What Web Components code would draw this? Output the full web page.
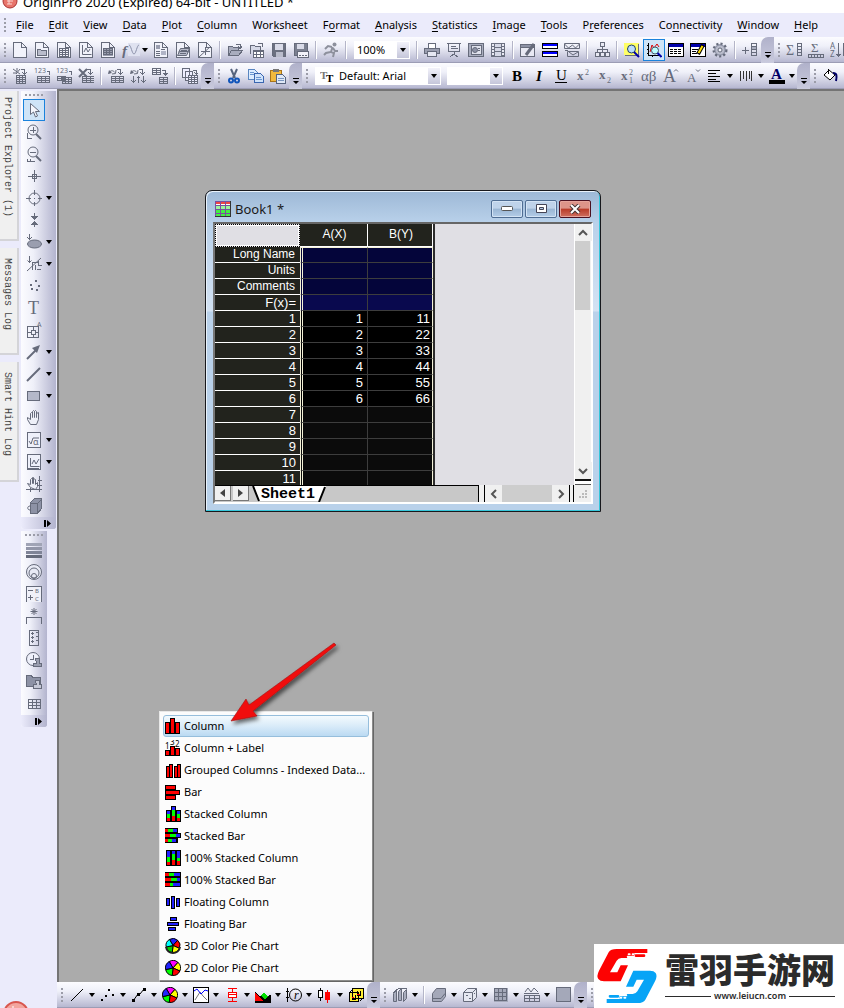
<!DOCTYPE html>
<html lang="en">
<head>
<meta charset="utf-8">
<title>OriginPro 2020 (Expired) 64-bit - UNTITLED *</title>
<style>
  body { margin: 0; font-family: "Noto Sans", "Open Sans", sans-serif; font-size: 11px; color: #000; background: #ebebfb; }
</style>
</head>
<body>
<origin-app></origin-app>
<script>
const G = '#666b7b';

/* ---------- drawing helpers for the icon set ---------- */
const p = (d, a = '') => `<path d="${d}" ${a}/>`;
const box = (x, y, w, h, fill, a = 'stroke="none"') => `<rect x="${x}" y="${y}" width="${w}" height="${h}" fill="${fill}" ${a}/>`;
const grid = (x, y, cols, rows, cw, ch, a = '') => {
  let d = '';
  for (let i = 0; i <= cols; i++) d += `M${x + i * cw + .5} ${y}v${rows * ch + 1}`;
  for (let j = 0; j <= rows; j++) d += `M${x} ${y + j * ch + .5}h${cols * cw + 1}`;
  return p(d, a);
};
const txt = (s, x, y, size, a = '') => `<text x="${x}" y="${y}" font-size="${size}" stroke="none" fill="${G}" ${a}>${s}</text>`;
const page = p('M1.5.5h8l5 5v10h-13zM9.5.5v5h5', 'fill="#f1f2fa"');
const pie = (cx, cy, r, colors) => {
  const n = colors.length;
  const pt = i => { const t = (i / n) * 2 * Math.PI - 2.1; return `${(cx + r * Math.cos(t)).toFixed(2)} ${(cy + r * Math.sin(t)).toFixed(2)}`; };
  return colors.map((c, i) => p(`M${cx} ${cy}L${pt(i)}A${r} ${r} 0 0 1 ${pt(i + 1)}z`, `fill="${c}" stroke="#000" shape-rendering="auto"`)).join('');
};
const smooth = 'shape-rendering="auto"';
const serif = 'font-family="Liberation Serif, serif"';
const red = 'fill="#f00" stroke="#000"', blue = 'fill="#22f" stroke="#000"';
const segs = list => list.map(([x, y, w, h, c]) => box(x, y, w, h, c)).join('');
const cyc = p('M1 5.500C2 2 5 2 7 4.500M4 6l3.500-.5L8 2', smooth) + p('M1 2l3 3-4 1z', `fill="${G}" stroke="none" ${smooth}`);
const down = p('M12.500 1v5M10.500 4.500l2 2 2-2M9 1.500h3');

const ICONS = {
  new: page,
  folderpage: page + p('M3.500 7.500h3l1 1h5v5h-9z', 'fill="#b9bccb"'),
  sheetpage: page + grid(3, 6, 3, 4, 3, 2),
  graphpage: page + p('M4.500 3v9.500h9M6 10l2-4 2 4 2-3', smooth),
  matrixpage: page + box(3, 6, 10, 8, '#9a9eaf') + grid(3, 6, 3, 3, 3, 2),
  fx: box(6, 1, 12, 13, '#dfe2f0') + p('M7 3c2 0 3 9 5 9s3-9 5-9', 'stroke="#8a90a8" ' + smooth) + txt('f', 0, 14, 15, serif + ' font-style="italic" font-weight="bold"'),
  layoutpage: page + box(3, 3, 4, 4, '#9a9eaf') + p('M3 9.500h4M3 11.500h4M3 13.500h4M8 7.500h4') + box(8, 9, 5, 4, '#b0b4c6'),
  stackpage: page + p('M2.500 13.500l2-4h9l-2 4zM3.500 10.500l2-4h9l-2 4', 'fill="#b9bccb" ' + smooth) + p('M6 8.500h6M5 11.500h6'),
  starpage: page + p('M8.500 5v8M4 9.500h9M2 15L14 4', smooth),
  open: p('M1.500 13.500v-9h4l1 1h5v3M1.500 13.500l3-5h11l-4 5z', 'fill="#a9adbe"') + p('M9 2.500h4v3M11 4.500l2 2 2-2'),
  opensheet: p('M1.500 11.500v-8h4l1 1h5v3', 'fill="#d5d8e6"') + p('M9 1.500h4v3') + box(4.5, 8.5, 10, 7, '#fff', '') + p('M4 9.500h11M7.500 10v5M11.500 10v5M5 12.500h9'),
  save: p('M1.500 1.500h13v13h-12l-1-1z', 'fill="#6b7080"') + box(4, 2, 8, 6, '#d9dbe8') + box(5, 10, 7, 5, '#b9bccb'),
  savetpl: p('M1.500 1.500h13v12h-13z', 'fill="#7b8090"') + box(4, 2, 7, 5, '#d9dbe8') + box(4.5, 9.5, 11, 6, '#f3f3fa', '') + p('M6 13.500h2M9 13.500h2M12 13.500h2'),
  run: `<circle cx="11.500" cy="2.500" r="2" fill="#8d909c" stroke="none" ${smooth}/>` + p('M9 5L5 4 2 7M9.500 5L8 10l-5 1-2 2M8 10l3 1-1 4M10 6l2 3h3', `stroke="#8d909c" stroke-width="2" ${smooth}`),
  print: p('M4.500 6V1.500h7V6', 'fill="#fff"') + p('M.5 6.500h15v5h-15z', 'fill="#9a9eaf"') + p('M3.500 9.500h9v5h-9z', 'fill="#e6e8f2"'),
  slide: p('M1 1.500h14M2.500 2v7h11V2M8 9v3M4 15l4-3 4 3') + p('M5 4.500h5M5 6.500h7'),
  view: p('M.5 1.500h15v13H.5z', 'fill="#a9adbe"') + p('M3 3.500h10v9H3z', 'fill="#dfe1ec"') + `<circle cx="7" cy="8" r="2.500" fill="#8d92a5" ${smooth}/>` + p('M10 6.500h2M10 8.500h2'),
  film: box(1, 1, 14, 14, '#6b7080') + [2, 5, 8, 11].map(y => box(2, y, 2, 2, '#e8e9f3') + box(12, y, 2, 2, '#e8e9f3')).join('') + box(5, 2, 6, 3, '#d5d8e6') + box(5, 6, 6, 3, '#d5d8e6') + box(5, 10, 6, 4, '#d5d8e6'),
  editpen: p('M.5 2.500h14v12H.5zM.5 5.500h14', 'fill="#e8e9f3"') + box(1, 3, 13, 2, '#8d92a5') + p('M6 13L14 2', `stroke-width="3" ${smooth}`) + p('M3 14h4'),
  panes: p('M.5 1.500h15v5H.5zM.5 9.500h15v5H.5z', 'fill="#fff" stroke="#000"') + box(1, 2, 14, 2, '#00f') + box(1, 10, 14, 2, '#00f'),
  envelopes: p('M.5 1.500h15v5H.5zM.5 2l4 4 4-3 3 3 4-4M3.500 9.500h11v5h-11zM1 8.500h3M5 10l4 3 5-3', smooth),
  tree: p('M6.500.5h4v4h-4zM1.500 10.500h4v4h-4zM6.500 10.500h4v4h-4zM11.500 10.500h4v4h-4zM8.500 5v5M3.500 10V7.500h10V10', 'fill="#e8e9f3"'),
  findyellow: box(0, 1, 15, 12, '#ff6') + p('M.5 13.500h14v-12') + `<circle cx="7.500" cy="7" r="4" fill="#bdf" stroke="#246" ${smooth}/>` + p('M10 10l5 5', `stroke="#00a" stroke-width="2" ${smooth}`),
  findgraph: p('M2.500 1v12.500H14', 'stroke="#000"') + p('M1 3.500h2M1 7.500h2M1 11.500h2M6.500 13v2', 'stroke="#000"') + p('M4 10l2-7 2 3 3-4 2 3', `stroke="#d00" ${smooth}`) + `<circle cx="9" cy="8.500" r="3.500" fill="#bff" stroke="#456" ${smooth}/>` + p('M11.500 11l4 4', `stroke="#00a" stroke-width="2" ${smooth}`),
  table: box(.5, 1.5, 15, 13, '#fff', 'stroke="#000"') + box(1, 2, 14, 3, '#00a') + p('M2 7.500h12M2 9.500h12M2 11.500h12', 'stroke="#000" stroke-dasharray="3 1"'),
  tableedit: box(.5, 1.5, 15, 13, '#fff', 'stroke="#000"') + box(1, 2, 14, 3, '#00a') + p('M2 7.500h6M2 9.500h4M2 11.500h5', 'stroke="#000"') + p('M8 12l5-9', `stroke="#000" stroke-width="4" ${smooth}`) + p('M8.500 11l4-7', `stroke="#fd0" stroke-width="2" ${smooth}`),
  gear: `<circle cx="8" cy="8" r="6" fill="#a9adbe" stroke-width="3" stroke-dasharray="2 2" ${smooth}/><circle cx="8" cy="8" r="5" fill="#b9bccb" stroke="#8d92a5" ${smooth}/><circle cx="8" cy="8" r="2" fill="#f1f2fa" ${smooth}/>`,
  addcol: p('M0 8.500h7M3.500 5v7') + grid(9, 1, 1, 4, 5, 3) + box(10, 5, 4, 2, '#a9adbe'),
  sigmacol: txt('Σ', 0, 13, 14, serif) + grid(11, 1, 1, 4, 4, 3),
  sigmarow: txt('Σ', 3, 10, 13, serif) + grid(0, 12, 5, 1, 3, 3),
  sort: txt('A', 0, 7, 8) + txt('Z', 0, 15, 8) + p('M8.500 1v13M6.500 12l2 2 2-2M13.500 1v13'),

  wand: p('M1 1l7 5M5 0v3M1 5h4M8 1L4 6', smooth) + down + grid(4, 7, 3, 4, 3, 2),
  num1: txt('123', 0, 5, 7) + p('M13 3.500h2v3') + grid(3, 8, 3, 3, 4, 2),
  num2: txt('123', 0, 5, 7) + p('M13 3.500h2v3') + grid(1, 8, 2, 2, 4, 2) + grid(6, 9, 3, 3, 3, 2),
  excel: p('M1 1l8 8M9 1l-8 8', `stroke-width="2" ${smooth}`) + down + grid(4, 8, 3, 3, 4, 2),
  recalc: cyc + down + grid(3, 8, 3, 3, 4, 2),
  recalcall: cyc + down + p('M3.500 8v6M1.500 12.500l2 2 2-2M8.500 8v7M6.500 10.500l2-2 2 2M13.500 8v6M11.500 12.500l2 2 2-2'),
  transpose: grid(0, 0, 2, 3, 4, 2) + p('M10 2.500h3v4M11.500 5l2 2 2-2') + grid(7, 9, 2, 3, 4, 2),
  stack: p('M.5.500h7v9h-7zM3.500 3.500h7v9h-7z', 'fill="#eef"') + p('M11 2.500h3v3M12.500 4.500l2 2 2-2') + box(6, 7, 10, 9, '#eef') + grid(6, 7, 3, 4, 3, 2),
  cut: p('M5 1l4 9M11 1L7 10', `stroke="#56647e" stroke-width="2" ${smooth}`) + `<circle cx="5" cy="12.500" r="2" stroke="#15b" stroke-width="2" ${smooth}/><circle cx="11" cy="12.500" r="2" stroke="#15b" stroke-width="2" ${smooth}/>`,
  copy: p('M.5 1.500h6l3 3v7h-9z', 'fill="#dcecff" stroke="#5a86c0"') + p('M6.500 5.500h6l3 3v6h-9z', 'fill="#cfe2fa" stroke="#3a66b0"') + p('M8 9.500h5M8 11.500h6M2 4.500h4M2 6.500h4', 'stroke="#6a96d0"'),
  paste: p('M.5 2.500h11v11h-11z', 'fill="#f2b93c" stroke="#a8741a"') + box(3, 1, 6, 3, '#777') + p('M6.500 6.500h6l3 3v6h-9z', 'fill="#dfe8f6" stroke="#56647e"') + p('M8 10.500h6M8 12.500h6', 'stroke="#7a96c0"'),
  bold: txt('B', 3, 13, 15, serif + ' font-weight="bold" style="fill:#000"'),
  italic: txt('I', 5, 13, 15, serif + ' font-weight="bold" font-style="italic" style="fill:#000"'),
  underline: txt('U', 3, 12, 15, serif + ' style="fill:#000"') + p('M2 14.500h12', 'stroke="#000"'),
  sup: txt('x', 2, 12, 13, serif + ' font-weight="bold"') + txt('2', 10, 7, 8, serif),
  sub: txt('x', 2, 11, 13, serif + ' font-weight="bold"') + txt('2', 10, 15, 8, serif),
  supsub: txt('x', 2, 12, 13, serif + ' font-weight="bold"') + txt('2', 10, 7, 8, serif) + txt('1', 10, 15, 8, serif),
  greek: txt('αβ', 0, 13, 15, serif),
  grow: txt('A', 0, 14, 18, serif) + p('M11 3.500l2-2 2 2', smooth),
  shrink: txt('A', 2, 14, 13, serif) + p('M11 1.500l2 2 2-2', smooth),
  align: p('M1 2.500h12M1 5.500h8M1 8.500h12M1 11.500h8M1 13.500h12', 'stroke="#000"'),
  vlines: p('M2.500 3v10M5.500 3v8M8.500 3v10M11.500 3v8M13.500 3v10', 'stroke="#333"'),
  fontcolor: txt('A', 2, 11, 15, serif + ' font-weight="bold" style="fill:#006"') + box(0, 12, 16, 4, '#000'),
  fill: p('M2 7l5-5 6 5-5 5z', `fill="#fff" stroke="#000" ${smooth}`) + p('M6 6V1', 'stroke="#000"') + p('M11 5c4 0 4 3 3 8', `stroke="#006" stroke-width="2" ${smooth}`),

  pointer: p('M4.500 1.500v11l3-2.500 2 5 2-1-2-4.500h4z', `fill="#f5f6fc" ${smooth}`),
  zoomin: `<circle cx="7" cy="6" r="5" ${smooth}/>` + p('M4 6.500h6M7.500 3v6M1.500 9v5.500H6') + p('M10 10l5 5', `stroke-width="2" ${smooth}`),
  zoomout: `<circle cx="7" cy="6" r="5" ${smooth}/>` + p('M4 6.500h6M1 12.500v3h8M4.500 13v2') + p('M10 10l5 5', `stroke-width="2" ${smooth}`),
  cross: p('M8.500 2v12M2 8.500h13M6.500 6.500h4v4h-4z'),
  target: `<circle cx="8.500" cy="8.500" r="5.500" ${smooth}/>` + p('M8.500 0v5M8.500 12v4M0 8.500h5M12 8.500h4M8 8.500h1'),
  arrows: p('M8.500 1v6M5.500 4.500l3 3 3-3zM8.500 15v-5M5.500 12.500l3-3 3 3z', `fill="${G}"`),
  ellipse: `<ellipse cx="8.500" cy="10" rx="7" ry="4" fill="#9a9eaf" ${smooth}/>` + p('M3.500 0v6M1.500 3.500l2 2 2-2'),
  picker: p('M3.500 0v7M1.500 4.500l2 2 2-2M15 2L1 15', smooth) + p('M6.500 14v-8h5M9.500 9v5M12.500 5v4h3M11 13.500h4'),
  dots: p('M4 7h2M9 3h2M12 8h2M5 11h2M10 12h2', 'stroke-width="2"'),
  text: txt('T', 2, 14, 18, serif),
  region: p('M1.500 4.500h11v11h-11zM7 5v3M7 12v3M2 10h3M9 10h3') + p('M5 8h4v4H5z') + txt('A', 11, 5, 7),
  arrow: p('M1 15L11 5', `stroke-width="2" ${smooth}`) + p('M6 4l8-3-3 8z', `fill="${G}" stroke="none" ${smooth}`),
  line: p('M1 15L14 2', `stroke-width="2" ${smooth}`),
  rect: p('M1.500 3.500h12v9h-12z', 'fill="#b4b8c9"'),
  hand: p('M4.500 14.500L1.500 9.500v-2l3 2v-6l1-1 1 1v4-6l1-1 1 1v6-6l1-1 1 1v6-4l2-1v7l-2 5z', `fill="#eef0f8" ${smooth}`),
  sqrt: box(1.5, .5, 13, 15, '#eef0fa', '') + p('M3 9l2 3 2-6h6', smooth) + txt('α', 7, 13, 9),
  graphobj: box(1.5, .5, 13, 15, '#eef0fa', '') + p('M4.500 4v8.500h9M2 14.500h11M6 10l2-4 2 4 3-5', smooth),
  handaxes: p('M4.500 11.500L1.500 7.500l3 1v-5l1-1 1 1v4-6h1v6-5l2 1v5l2-2v4l-2 3z', `fill="#eef0f8" ${smooth}`) + p('M0 13.500h16M4.500 12v4M13.500 0v16M12 4.500h4M12 9.500h4'),
  cube: p('M4.500 4.500l4-4h7v10l-4 5h-7z', 'fill="#8d92a5"') + p('M4.500 5.500h7l4-4M11.500 5v10') + p('M4 8c-3 0-3 4 0 4', smooth),
  layers: box(0, 1, 16, 3, '#a0a4b5') + box(0, 5, 16, 3, '#9296a8') + box(0, 9, 16, 3, '#7f8497') + box(0, 13, 16, 3, G),
  rings: `<circle cx="8" cy="8" r="7.500" fill="#e8eaf5" ${smooth}/><circle cx="8" cy="9" r="5" ${smooth}/><circle cx="8" cy="12" r="2.500" ${smooth}/>`,
  legend: p('M.5 15.500V.5h15v15', 'fill="#f0f1f9"') + p('M2 4.500h5M2 11.500h5M4.500 9v5') + txt('B', 9, 7, 6) + txt('C', 9, 15, 6),
  bracket: p('M.5 15.500v-6h15v6') + p('M8 0v7M4.500 3.500h7M5.500 1l5 5M10.500 1l-5 5', smooth),
  scale: p('M3.500.5h9v15h-9zM5 3.500h3M5 7.500h3M5 11.500h3M10 2.500h2M10 6.500h2M10 10.500h2M6.500 2v3M6.500 6v3M6.500 10v3'),
  clock: `<circle cx="7" cy="7" r="6.500" fill="#eef0fa" ${smooth}/>` + p('M7 3v4H4') + p('M9.500 6.500h4v5h2v3h-8v-3h3z', 'fill="#9a9eaf"'),
  folder: p('M.5 12.500v-11h5l1 2h8v9z', 'fill="#8d92a5"') + p('M9.500 6.500h4v4h2v4h-8v-4h3z', 'fill="#c5c8d6"'),
  gridt: grid(2, 3, 3, 3, 4, 3),

  pline: p('M2 14L14 2', `stroke="#000" ${smooth}`),
  pscatter: segs([[1, 12, 2, 2, '#000'], [5, 8, 2, 2, '#000'], [8, 2, 2, 2, '#000'], [12, 7, 2, 2, '#000']]),
  plinesym: p('M2 14L7 7h2l4-5', `stroke="#000" ${smooth}`) + segs([[1, 12, 3, 3, '#000'], [6, 6, 3, 3, '#000'], [12, 1, 3, 3, '#000']]),
  pie2: pie(8, 8, 7.5, ['#f0f', '#ff0', '#f00', '#0f0', '#22f']),
  pie3: pie(8, 7.5, 7, ['#22f', '#f00', '#ff0', '#0c0', '#0ff']) + p('M1 9c1 8 13 8 14 0', `stroke="#222" stroke-width="2" ${smooth}`),
  pgraph: box(.5, .5, 15, 15, '#fff', 'stroke="#000"') + p('M2 13l5-8 3 4 4 4', `stroke="#777" ${smooth}`) + p('M1 4l3-2 4 5 4-4 3 1', `stroke="#00f" ${smooth}`),
  pbox: p('M8.500 1v14M4 1.500h9M4 14.500h9', 'stroke="#f00"') + p('M4.500 5.500h8v5h-8zM4 7.500h9', 'stroke="#f00" fill="#fff"'),
  parea: p('M0 16V5l5 5 4-5 2 4 5-1v8z', 'fill="#000" stroke="none"') + p('M0 14V5l8 9z', 'fill="#f00" stroke="none"') + p('M6 9l3-4 4 5-3 2z', 'fill="#0d0" stroke="none"'),
  polar: p('M1.500 1v14M0 4.500h3M0 10.500h3', 'stroke="#000"') + `<circle cx="9.500" cy="8" r="6" stroke="#000" ${smooth}/>` + txt('r', 8, 12, 12, serif + ' font-style="italic" style="fill:#000"'),
  candle: p('M3.500 1v13', 'stroke="#000"') + box(1.5, 3.5, 4, 7, '#fff', 'stroke="#000"') + p('M10.500 3v13', 'stroke="#f00"') + box(8, 5, 5, 8, '#f00'),
  pyellow: p('M1.500 5.500h9v9h-9zM4.500 1.500h11v10h-11z', 'fill="#fe3" stroke="#000"') + p('M4.500 8v4.500h3V8M9.500 4v4h3V4', 'stroke="#000"') + p('M2 5l3-3M12 14l3-3', 'stroke="#000"') + p('M4 10h2M9 7h3', 'stroke="#f00"'),
  g3bars: p('M1.500 6.500l3-3v11h-3zM6.500 4.500l3-3v12h-3zM11.500 5.500l3-3v9l-3 3z', `fill="#a9adbe" ${smooth}`) + p('M1 6l6-5h8'),
  slab: p('M1.500 6.500l4-5h9v8l-4 5h-9z', `fill="#a4a8b9" ${smooth}`) + p('M1 11.500h9l4-5', smooth),
  cubedots: p('M1.500 5.500l4-4h9v9l-4 4h-9zM1.500 5.500h9v9M10.500 5.500l4-4', `fill="#e6e8f2" ${smooth}`) + p('M4 8h2M7 11h2M12 6h1'),
  contourgrid: box(1, 1, 14, 14, '#a4a8b9') + grid(1, 1, 3, 3, 4, 4),
  waves: p('M0 6.500h15M1 5l3-4 3 4 3-4 4 4', smooth) + grid(0, 8, 3, 2, 5, 3),
  plate: box(1.5, .5, 14, 14, '#a4a8b9', ''),

  column: p('M.5 4.500h4v11h-4zM5.500.5h4v15h-4zM10.500 4.500h4v11h-4z', red),
  columnlabel: p('M.5 10.500h4v5h-4zM5.500 6.500h4v9h-4zM10.500 8.500h4v7h-4z', red) + txt('1', 0, 9, 8, 'style="fill:#000"') + txt('3', 5, 5, 8, 'style="fill:#000"') + txt('2', 10, 7, 8, 'style="fill:#000"'),
  grouped: p('M1.500 4.500h3v11h-3zM4.500 2.500h3v13h-3zM9.500 4.500h3v11h-3zM12.500 2.500h3v13h-3z', red),
  bar: p('M.5 1.500h10v4H.5zM.5 6.500h14v4H.5zM.5 11.500h10v4H.5z', red),
  stackcol: box(1, 4, 15, 12, '#000') + box(6, 0, 5, 5, '#000') + segs([[2, 5, 3, 3, '#22f'], [2, 8, 3, 4, '#0f0'], [2, 12, 3, 3, '#f00'], [7, 1, 3, 3, '#22f'], [7, 4, 3, 6, '#0f0'], [7, 10, 3, 5, '#f00'], [12, 5, 3, 3, '#22f'], [12, 8, 3, 4, '#0f0'], [12, 12, 3, 3, '#f00'], [5, 0, 1, 3, '#fff']]),
  stackbar: box(0, 0, 13, 15, '#000') + box(11, 5, 5, 5, '#000') + segs([[0, 1, 3, 3, '#f00'], [3, 1, 5, 3, '#0f0'], [8, 1, 4, 3, '#22f'], [0, 6, 5, 3, '#f00'], [5, 6, 6, 3, '#0f0'], [11, 6, 4, 3, '#22f'], [0, 11, 3, 3, '#f00'], [3, 11, 4, 3, '#0f0'], [7, 11, 4, 3, '#22f']]),
  fullcol: box(1, 0, 15, 16, '#000') + segs([[2, 1, 3, 6, '#22f'], [2, 7, 3, 5, '#0f0'], [2, 12, 3, 3, '#f00'], [7, 1, 3, 3, '#22f'], [7, 4, 3, 6, '#0f0'], [7, 10, 3, 5, '#f00'], [12, 1, 3, 7, '#22f'], [12, 8, 3, 3, '#0f0'], [12, 11, 3, 4, '#f00']]),
  fullbar: box(0, 0, 16, 15, '#000') + segs([[0, 1, 4, 3, '#f00'], [4, 1, 5, 3, '#0f0'], [9, 1, 6, 3, '#22f'], [0, 6, 6, 3, '#f00'], [6, 6, 6, 3, '#0f0'], [12, 6, 3, 3, '#22f'], [0, 11, 5, 3, '#f00'], [5, 11, 3, 3, '#0f0'], [8, 11, 7, 3, '#22f']]),
  floatcol: p('M1.500 4.500h3v7h-3zM6.500 2.500h3v12h-3zM11.500 4.500h3v8h-3z', blue),
  floatbar: p('M5.500 1.500h6v3h-6zM2.500 6.500h11v3h-11zM3.500 11.500h7v3h-7z', blue),
  book: box(0, 0, 15, 15, '#fff') + box(0, 0, 15, 3, '#e44') + box(0, 4, 15, 4, '#9df59d') + box(0, 9, 15, 6, '#4e4') + grid(0, 0, 3, 4, 5, 4, 'stroke="#7a4fa0"') + p('M15.500 0v15.500H0', 'stroke="#333"'),
};
const svg = (name, w = 16) => `<svg viewBox="0 0 ${w} 16" width="${w}" height="16" fill="none" stroke="${G}" shape-rendering="crispEdges" aria-hidden="true">${ICONS[name]}</svg>`;

const define = (name, render) => customElements.define(name, class extends HTMLElement {
  connectedCallback() {
    if (this.shadowRoot) return;
    this.attachShadow({ mode: 'open' }).innerHTML = render(this);
  }
});

/* ---------- toolbar parts ---------- */
define('tool-bar', el => {
  const v = el.hasAttribute('vertical');
  return `<style>
    :host { display: flex; flex: none; overflow: hidden; flex-direction: ${v ? 'column' : 'row'}; ${v ? '' : 'height: 26px; align-items: center; box-shadow: inset 0 -1px #9c9db5;'}
      background: linear-gradient(${v ? '90deg' : '180deg'}, #fcfcff 0%, #eff0f9 35%, #b3b4ce 100%);
      border-radius: ${v ? '0 0 3px 3px' : '0'}; }
  </style><slot></slot>`;
});
define('tool-grip', el => {
  const v = el.hasAttribute('vertical');
  return `<style>
    :host { display: block; flex: none; box-sizing: border-box; ${v ? 'height: 8px; padding: 3px 4px;' : 'width: 9px; height: 26px; padding: 6px 4px;'} }
    i { display: block; ${v ? 'height: 2px; width: 18px;' : 'width: 2px; height: 14px;'}
      background: repeating-linear-gradient(${v ? '90deg' : '180deg'}, #9b9ca8 0 2px, transparent 2px 4px); }
  </style><i></i>`;
});
define('tool-sep', () => `<style>
    :host { display: block; flex: none; width: 8px; }
    i { display: block; width: 1px; height: 18px; margin: 0 auto; background: #b4b5c8; border-right: 1px solid #fff; }
  </style><i></i>`);
define('tool-button', el => {
  const drop = el.hasAttribute('drop'), v = el.hasAttribute('vertical'), wide = el.getAttribute('icon') === 'fx';
  return `<style>
    :host { display: block; flex: none; }
    button { box-sizing: border-box; display: flex; align-items: center; gap: ${wide ? 2 : 4}px; height: 22px; margin: 0;
      width: ${v ? '35px' : drop ? '31px' : '22px'}; padding: 0 0 0 ${v ? '5px' : '3px'}; border: 0; background: none; color: inherit; font-family: inherit; }
    svg { flex: none; }
    .b { display: flex; box-sizing: border-box; flex: none; }
    .on { margin: 0 -3px; padding: 2px; border: 1px solid #1a82dc; background: #cfe4f7; }
  </style><button type="button" aria-label="${el.getAttribute('label') || el.getAttribute('icon')}">
    <span class="b ${el.hasAttribute('active') ? 'on' : ''}">${svg(el.getAttribute('icon'), wide ? 18 : 16)}</span>
    ${drop ? '<svg width="6" height="4" viewBox="0 0 6 4"><path d="M0 0h6L3 4z" fill="#000"/></svg>' : ''}</button>`;
});
define('tool-more', el => {
  const v = el.hasAttribute('vertical');
  return `<style>
    :host { display: block; flex: none; }
    button { display: flex; align-items: flex-end; justify-content: center; box-sizing: border-box; border: 0; margin: 0;
      ${v ? 'width: 100%; height: 12px; padding: 0 4px 2px; justify-content: flex-end; background: linear-gradient(90deg, #ebebfb, #b3b4ce);'
          : 'width: 13px; height: 26px; padding: 0 0 4px; border-radius: 7px 0 0 0; background: linear-gradient(#b0b1ca, #c9cadd);'} }
  </style><button type="button" aria-label="More buttons">${v
    ? '<svg width="8" height="8" viewBox="0 0 8 8"><path d="M0 1h2v7H0zM3 1l4 3.500L3 8z"/></svg>'
    : '<svg width="8" height="8" viewBox="0 0 8 8"><path d="M1 1h6v1H1zM1 4h6L4 7z"/></svg>'}</button>`;
});
define('tool-combo', el => `<style>
    :host { display: flex; flex: none; position: relative; height: 18px; width: ${el.getAttribute('width')}px; background: #fff; align-items: center; }
    select { appearance: none; box-sizing: border-box; width: 100%; height: 18px; border: 0; margin: 0; background: none;
      padding: 0 13px 0 ${el.hasAttribute('font') ? '24px' : '3px'}; font: 11px/18px "Noto Sans", sans-serif; color: #000; }
    .d { position: absolute; right: 1px; top: 1px; width: 12px; height: 16px; display: flex; align-items: center; justify-content: center;
      background: linear-gradient(#f2f2fa, #c5c6da); pointer-events: none; }
    .t { position: absolute; left: 5px; top: 2px; pointer-events: none; }
  </style><select aria-label="${el.getAttribute('label')}"><option>${el.getAttribute('value')}</option></select>
  ${el.hasAttribute('font') ? '<svg class="t" width="14" height="14" aria-hidden="true"><g font-family="Liberation Serif, serif" font-weight="bold"><text x="0" y="10" font-size="11" fill="#777">T</text><text x="6" y="13" font-size="11">T</text></g></svg>' : ''}
  <span class="d"><svg width="6" height="4" viewBox="0 0 6 4"><path d="M0 0h6L3 4z"/></svg></span>`);

/* ---------- menu bar ---------- */
const MENUS = ['_File', '_Edit', '_View', '_Data', '_Plot', '_Column', 'Wor_ksheet', 'F_ormat', '_Analysis', '_Statistics', '_Image', '_Tools', 'P_references', 'Co_nnectivity', '_Window', '_Help'];
define('menu-bar', () => `<style>
    :host { display: flex; flex: none; height: 24px; align-items: center; background: #ebebfb; overflow: hidden; }
    nav { display: flex; gap: 15px; padding-left: 7px; }
    button { border: 0; padding: 0; margin: 0; background: none; font: inherit; line-height: 16px; color: #000; white-space: nowrap; }
    u { text-underline-offset: 2px; }
  </style><tool-grip></tool-grip><nav>${MENUS.map(m => `<button type="button">${m.replace(/_(.)/, '<u>$1</u>')}</button>`).join('')}</nav>`);

/* ---------- docked panel tab ---------- */
define('dock-tab', () => `<style>
    :host { display: block; box-sizing: border-box; width: 19px; border-right: 2px solid #d4d4d8; border-bottom: 2px solid #d4d4d8; background: #f0f0f0; }
    button { box-sizing: border-box; width: 100%; height: 100%; border: 0; margin: 0; padding: 6px 2px 0 0; background: none; writing-mode: vertical-rl; text-align: start;
      font: 10px/15px "Liberation Mono", monospace; color: #444; white-space: nowrap; }
  </style><button type="button"><slot></slot></button>`);

/* ---------- worksheet ---------- */
const ROWS = [['Long Name'], ['Units'], ['Comments'], ['F(x)='], ['1', '1', '11'], ['2', '2', '22'], ['3', '3', '33'], ['4', '4', '44'], ['5', '5', '55'], ['6', '6', '66'], ['7'], ['8'], ['9'], ['10'], ['11']];
define('data-sheet', () => `<style>
    :host { display: block; overflow: hidden; background: #e0dfe4; font-family: "Liberation Sans", Arial, sans-serif; }
    table { border-collapse: separate; border-spacing: 0; table-layout: fixed; width: 220px; border-right: 2px solid #2c2c2c; background: #22231d; color: #fff; }
    th, td { box-sizing: border-box; padding: 0; font-weight: normal; overflow: hidden; white-space: nowrap; }
    thead th { height: 23px; font-size: 12px; line-height: 20px; padding: 0 0 2px 2px; border-right: 1px solid #fff; border-bottom: 1px solid #fff; }
    thead td { background: #e0dfe4; border: 1px dotted #000; outline: 1px solid #fff; outline-offset: -2px; }
    tbody th { height: 16px; font-size: 13px; line-height: 15px; text-align: right; padding-right: 4px; border-bottom: 1px solid #fff; }
    tbody td { font-size: 13px; line-height: 15px; text-align: right; padding-right: 4px; background: #0b0b0b; border-bottom: 1px solid #3d3d3d; }
    tbody td:nth-child(2) { border-left: 3px double #f4f2d8; border-right: 1px solid #3d3d3d; }
    tbody td:last-child { border-right: 1px solid #f4f2d8; padding-right: 2px; }
    tbody tr:first-child td { border-top: 1px solid #f4f2d8; }
    tr.meta th { font-size: 12px; padding-right: 5px; }
    tr.meta td { background: #04053a; }
    tr.fx td { background: #09094e; }
    tr.full td { background: #000; }
  </style><table><colgroup><col style="width:85px"><col style="width:68px"><col style="width:65px"></colgroup>
  <thead><tr><td></td><th scope="col">A(X)</th><th scope="col">B(Y)</th></tr></thead>
  <tbody>${ROWS.map((r, i) => `<tr class="${i === 3 ? 'fx' : i < 3 ? 'meta' : r[1] ? 'full' : ''}"><th scope="row">${r[0]}</th><td>${r[1] || ''}</td><td>${r[2] || ''}</td></tr>`).join('')}</tbody></table>`);

const chev = d => `<svg width="10" height="10" viewBox="0 0 10 10" fill="none" stroke="#555" stroke-width="2" aria-hidden="true"><path d="${d}"/></svg>`;
define('book-window', el => `<style>
    :host { box-sizing: border-box; display: flex; flex-direction: column; width: 396px; height: 322px; padding: 0 7px 7px; overflow: hidden;
      border: 1px solid #17181c; border-radius: 7px 7px 0 0; background: linear-gradient(#9db8d6, #b9d1ea 32px, #d3e2f3 120px, #b9d1ea 121px);
      box-shadow: inset -1px -1px #35c6da, inset 1px 1px #e9f2fb; }
    header { display: flex; flex: none; align-items: center; height: 31px; padding: 4px 2px 0 2px; gap: 2px; box-sizing: border-box; }
    h1 { flex: 1; margin: 0 0 0 2px; font-size: 13px; font-weight: normal; line-height: 20px; color: #1a1a1a; }
    header button { box-sizing: border-box; width: 32px; height: 18px; padding: 0; display: flex; align-items: center; justify-content: center;
      border: 1px solid #4f6d93; border-radius: 2px; box-shadow: inset 0 0 0 1px #d3e3f4; background: linear-gradient(#bfd3ea 45%, #9ab6d4 50%, #b4cde8); }
    header .x { border-color: #4b1020; box-shadow: inset 0 0 0 1px #e5a49b; background: linear-gradient(#dd9489 45%, #b93b28 50%, #cf7061); }
    .frame { flex: 1; min-height: 0; box-sizing: border-box; display: flex; flex-direction: column; border: 2px solid #fff; border-top-color: #666; border-left-color: #777; }
    .top { flex: 1; min-height: 0; display: flex; }
    data-sheet { flex: 1; }
    .vs { width: 17px; box-sizing: border-box; border-left: 1px solid #fff; background: #f0f0f0; display: flex; flex-direction: column; align-items: center; }
    .vs .thumb { width: 100%; height: 69px; background: #cdcdcd; border-right: 1px solid #f0f0f0; box-sizing: border-box; }
    .vs button, .hs button, .nav button { border: 0; padding: 0; margin: 0; background: #f0f0f0; display: flex; align-items: center; justify-content: center; height: 17px; width: 17px; }
    .vs .sp { flex: 1; }
    .split { width: 100%; height: 3px; border-top: 2px solid #111; border-bottom: 1px solid #555; background: #fff; }
    .bot { flex: none; display: flex; height: 17px; background: #f0f0f0; }
    .tabs { flex: 1; display: flex; background: #c8c8c8; border-right: 1px solid #000; margin-right: 5px; border-top: 1px solid #000; box-sizing: border-box; }
    .nav { display: flex; gap: 2px; }
    .nav button { height: 15px; width: 16px; border-right: 1px solid #777; border-bottom: 1px solid #777; box-sizing: border-box; }
    .tab { position: relative; border: 0; padding: 0; margin: 0 0 0 1px; width: 76px; height: 16px; background: none; color: #000; font: bold 15px/17px "Liberation Mono", monospace; }
    .tab svg { position: absolute; left: 0; top: 0; }
    .tab span { position: relative; }
    .hs { display: flex; width: 86px; border-left: 1px solid #000; border-right: 1px solid #000; box-sizing: border-box; }
    .hs .thumb { flex: 1; background: #cdcdcd; }
    .size { width: 18px; margin-left: 3px; box-sizing: border-box; border-left: 1px solid #000; display: flex; align-items: flex-end; justify-content: flex-end; padding: 3px; }
  </style>
  <header>${svg('book')}<h1>${el.getAttribute('heading')}</h1>
    <button type="button" aria-label="Minimize"><svg width="12" height="6"><rect x=".5" y=".5" width="11" height="4" rx="1" fill="#fff" stroke="#555"/></svg></button>
    <button type="button" aria-label="Maximize"><svg width="11" height="9"><path d="M.5.5h10v8H.5zM3.500 3.500v2h4v-2z" fill="#fff" stroke="#445" fill-rule="evenodd"/></svg></button>
    <button type="button" class="x" aria-label="Close"><svg width="12" height="10" viewBox="0 0 12 10"><path d="M2 1l8 8M10 1L2 9" stroke="#433" stroke-width="4"/><path d="M2 1l8 8M10 1L2 9" stroke="#fff" stroke-width="2"/></svg></button>
  </header>
  <div class="frame">
    <div class="top"><data-sheet></data-sheet>
      <div class="vs"><button type="button" aria-label="Scroll up">${chev('M1 7l4-4 4 4')}</button><div class="thumb"></div><div class="sp"></div><button type="button" aria-label="Scroll down">${chev('M1 3l4 4 4-4')}</button><div class="split"></div></div>
    </div>
    <div class="bot">
      <div class="tabs"><div class="nav"><button type="button" aria-label="Previous sheet"><svg width="5" height="8"><path d="M5 0v8L0 4z" fill="#444"/></svg></button><button type="button" aria-label="Next sheet"><svg width="5" height="8"><path d="M0 0v8l5-4z" fill="#444"/></svg></button></div>
        <button type="button" class="tab"><svg width="78" height="16"><path d="M2 0l7 15h60L76 0z" fill="#fff"/><path d="M3 0l6 15M69 16l6-15" stroke="#000" stroke-width="2"/></svg><span>Sheet1</span></button></div>
      <div class="hs"><button type="button" aria-label="Scroll left">${chev('M7 1L3 5l4 4')}</button><div class="thumb"></div><button type="button" aria-label="Scroll right">${chev('M3 1l4 4-4 4')}</button></div>
      <div class="size"><svg width="9" height="9"><path d="M6 0h2v2H6zM3 3h2v2H3zM6 3h2v2H6zM0 6h2v2H0zM3 6h2v2H3zM6 6h2v2H6z" fill="#bbb"/></svg></div>
    </div>
  </div>`);

/* ---------- plot flyout ---------- */
define('plot-menu', () => `<style>
    :host { box-sizing: border-box; display: block; width: 214px; padding: 3px 3px 1px; background: #fcfcfc; border: 1px solid #8c8c8c; border-top-color: #e8e8e8; border-left-color: #e8e8e8; box-shadow: 1px 1px #666; }
  </style><slot></slot>`);
define('plot-item', el => `<style>
    :host { display: block; }
    button { box-sizing: border-box; display: flex; align-items: center; width: 206px; height: 22px; margin: 0; padding: 0 0 0 1px; gap: 3px; border: 1px solid transparent; border-radius: 3px;
      background: none; font: inherit; color: #000; white-space: nowrap; text-align: left; }
    span { padding-bottom: 2px; }
    :host([selected]) button { border-color: #96bedc; background: linear-gradient(#f4fafe, #d9ebf9 50%, #bbdaf2); }
  </style><button type="button">${svg(el.getAttribute('icon'))}<span><slot></slot></span></button>`);

/* ---------- site mark ---------- */
define('site-mark', () => {
  const half = 'M172 27H80Q62 27 56 37L27 92Q19 108 25 117Q30 124 42 124H92L114 76H92L82 97H60L80 62Q85 54 94 54H112Q108 50 112 47H132Q136 43 132 39H172z';
  const dots = '<path d="M138 47h24M118 43h1" stroke="#fd0202" stroke-width="8" stroke-linecap="round"/><path d="M116 43h3M128 43h2" stroke="#fff" stroke-width="6" stroke-linecap="round"/>';
  return `<style>
    :host { box-sizing: border-box; display: flex; width: 250px; height: 64px; background: #fff; }
    div { display: flex; flex-direction: column; padding-left: 7px; }
    b { font: 900 34px/40px "Noto Sans CJK SC", sans-serif; color: #2b2b2b; padding-top: 5px; white-space: nowrap; }
    a { display: flex; align-items: center; gap: 3px; color: #2b2b2b; font-size: 9px; font-weight: 600; line-height: 14px; text-decoration: none; }
    a::before, a::after { content: ""; flex: 1; height: 1px; background: #2b2b2b; }
  </style><svg width="64" height="64" viewBox="12 12 192 192" aria-hidden="true"><path d="${half}" fill="#fd0202"/>${dots}
    <g transform="rotate(180 111 108)"><path d="${half}" fill="#07a4f6"/>${dots.replace('#fd0202', '#07a4f6')}</g></svg>
  <div><b lang="zh">雷羽手游网</b><a href="#">www.leiucn.com</a></div>`;
});

/* ---------- application shell ---------- */
const build = (list, extra = '') => list.split(' ').map(t => {
  if (t === '|') return '<tool-sep></tool-sep>';
  if (t === '::') return `<tool-grip ${extra}></tool-grip>`;
  if (t === '>>') return `<tool-more ${extra}></tool-more>`;
  const [, name, flag] = t.match(/^(\w+)([+*]?)$/);
  return `<tool-button icon="${name}" ${extra} ${flag === '+' ? 'drop' : flag === '*' ? 'active' : ''}></tool-button>`;
}).join('');

define('origin-app', () => `<style>
    :host { display: flex; flex-direction: column; height: 100vh; overflow: hidden; }
    .title { display: flex; flex: none; align-items: flex-end; height: 13px; overflow: hidden; background: #fff; gap: 5px; padding-left: 2px; }
    .title svg { flex: none; margin-bottom: 4px; }
    .title span { font-size: 13px; line-height: 16px; padding-bottom: 3px; white-space: nowrap; }
    .main { flex: 1; min-height: 0; display: flex; }
    aside { position: relative; flex: none; width: 57px; display: flex; gap: 2px; padding-top: 2px; box-sizing: border-box; overflow: hidden; }
    .tabs { width: 19px; flex: none; display: flex; flex-direction: column; gap: 7px; }
    .t1 { height: 150px; } .t2 { height: 107px; padding-top: 4px; } .t3 { height: 120px; padding-top: 4px; }
    .tools { display: flex; flex-direction: column; gap: 2px; align-items: flex-start; }
    .tools tool-bar { width: 35px; }
    .tools tool-bar.narrow { width: 26px; }
    .orb { position: absolute; left: 3px; bottom: -19px; }
    .stage { flex: 1; min-width: 0; display: flex; flex-direction: column; }
    .desk { position: relative; flex: 1; min-height: 0; background: #ababab; border: 2px solid #747474; border-width: 2px 0 0 2px; }
    book-window { position: absolute; left: 146px; top: 99px; }
    plot-menu { position: absolute; left: 100px; bottom: 1px; }
    .arrow { position: absolute; left: 166px; bottom: 252px; pointer-events: none; }
    site-mark { position: absolute; right: 0; bottom: 0; }
    .zoom { margin: 0 3px 0 4px; } .face { margin: 0 6px 0 4px; } .points { margin-right: 3px; }
  </style>
  <div class="title"><svg width="16" height="16" viewBox="0 0 16 16" aria-hidden="true"><circle cx="8" cy="8" r="7" fill="#e8756b" stroke="#a33"/><path d="M4 5h7M5 8h6M5 11h5M7 3v8" stroke="#fbd7d2"/></svg><span>OriginPro 2020 (Expired) 64-bit - UNTITLED *</span></div>
  <menu-bar></menu-bar>
  <tool-bar>${build(':: new folderpage sheetpage graphpage matrixpage fx+ layoutpage stackpage starpage | open opensheet save savetpl | run |')}<tool-combo class="zoom" width="56" value="100%" label="Zoom"></tool-combo>${build('| print slide view film | editpen panes envelopes | tree | findyellow findgraph* table tableedit gear | addcol >> :: sigmacol sigmarow sort')}</tool-bar>
  <tool-bar>${build(':: wand num1 num2 excel | recalc recalcall transpose | stack >> :: cut copy paste >> ::')}<tool-combo class="face" width="126" font value="Default: Arial" label="Font"></tool-combo><tool-combo class="points" width="56" value="" label="Font size"></tool-combo>${build('bold italic underline sup sub supsub greek grow shrink align+ vlines+ fontcolor+ >> :: fill')}</tool-bar>
  <div class="main">
    <aside>
      <div class="tabs"><dock-tab class="t1">Project Explorer (1)</dock-tab><dock-tab class="t2">Messages Log</dock-tab><dock-tab class="t3">Smart Hint Log</dock-tab></div>
      <div class="tools">
        <tool-bar vertical>${build(':: pointer* zoomin zoomout cross target+ arrows ellipse+ picker+ dots text region arrow+ line+ rect+ hand sqrt+ graphobj+ handaxes cube >>', 'vertical')}</tool-bar>
        <tool-bar vertical class="narrow">${build(':: layers rings legend bracket scale clock folder gridt >>', 'vertical')}</tool-bar>
      </div>
      <svg class="orb" width="26" height="26" viewBox="0 0 26 26" aria-hidden="true"><circle cx="13" cy="13" r="12" fill="#f3a59e" stroke="#d8564e" stroke-width="2"/><path d="M8 8h8M10 5v6" stroke="#fff"/></svg>
    </aside>
    <div class="stage">
      <div class="desk">
        <book-window heading="Book1 *"></book-window>
        <plot-menu>
          <plot-item icon="column" selected>Column</plot-item>
          <plot-item icon="columnlabel">Column + Label</plot-item>
          <plot-item icon="grouped">Grouped Columns - Indexed Data...</plot-item>
          <plot-item icon="bar">Bar</plot-item>
          <plot-item icon="stackcol">Stacked Column</plot-item>
          <plot-item icon="stackbar">Stacked Bar</plot-item>
          <plot-item icon="fullcol">100% Stacked Column</plot-item>
          <plot-item icon="fullbar">100% Stacked Bar</plot-item>
          <plot-item icon="floatcol">Floating Column</plot-item>
          <plot-item icon="floatbar">Floating Bar</plot-item>
          <plot-item icon="pie3">3D Color Pie Chart</plot-item>
          <plot-item icon="pie2">2D Color Pie Chart</plot-item>
        </plot-menu>
        <svg class="arrow" width="120" height="94" viewBox="225 636 120 94" aria-hidden="true"><defs><filter id="s"><feDropShadow dx="2" dy="3" stdDeviation="2" flood-opacity=".6"/></filter></defs>
          <path d="M231 721l15-22 3 6L334 643l2 2-83 66 4 5z" fill="#f00808" stroke="#a31515" stroke-width=".6" filter="url(#s)"/></svg>
      </div>
      <tool-bar>${build(':: pline+ pscatter+ plinesym+ pie2+ pgraph+ pbox+ parea+ polar+ candle+ pyellow >> :: g3bars+ | slab+ cubedots+ contourgrid+ waves+ plate >> ::')}</tool-bar>
    </div>
  </div>
  <site-mark></site-mark>`);
</script>
</body>
</html>
